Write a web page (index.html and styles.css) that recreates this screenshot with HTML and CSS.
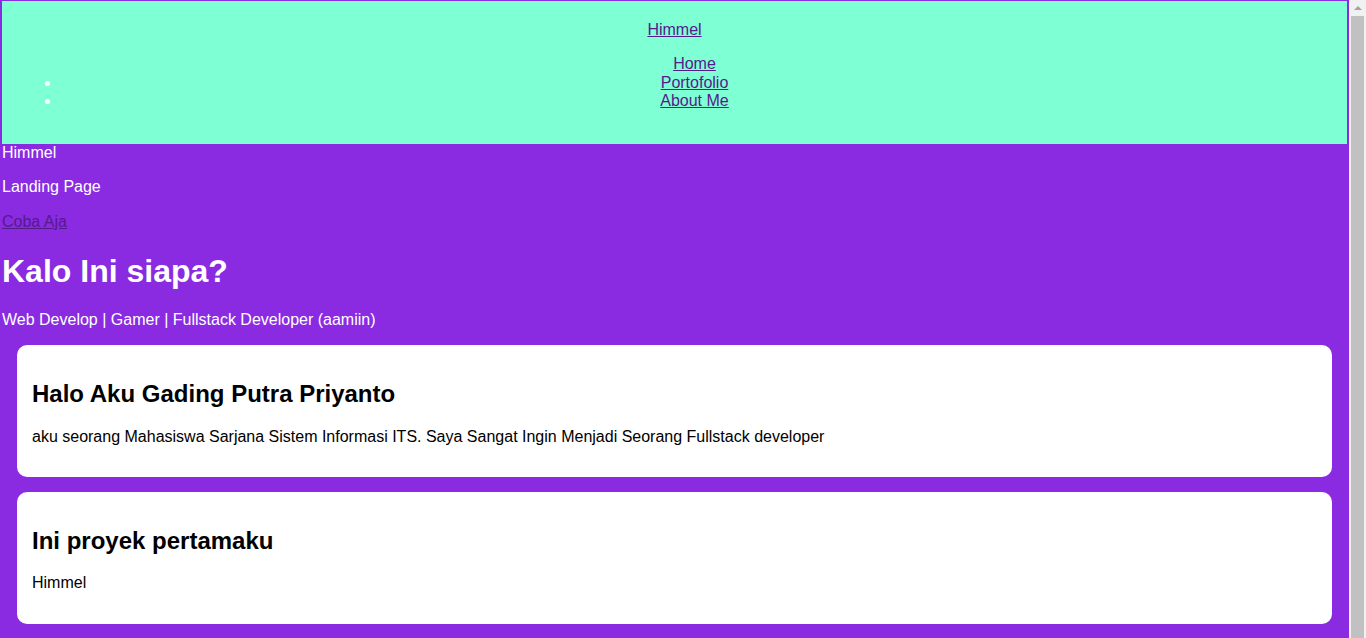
FILE: index.html
```html
<!DOCTYPE html>
<html lang="id">
<head>
<meta charset="utf-8">
<title>Himmel</title>
<link rel="stylesheet" href="styles.css">
</head>
<body>
<header class="site-header">
  <div class="brand"><a href="#">Himmel</a></div>
  <ul class="nav">
    <li class="nav-first"><a href="#">Home</a></li>
    <li><a href="#">Portofolio</a></li>
    <li><a href="#">About Me</a></li>
  </ul>
</header>
<div class="hero-name">Himmel</div>
<p>Landing Page</p>
<p><a href="#">Coba Aja</a></p>
<h1>Kalo Ini siapa?</h1>
<p>Web Develop | Gamer | Fullstack Developer (aamiin)</p>
<section class="card">
  <h2>Halo Aku Gading Putra Priyanto</h2>
  <p>aku seorang Mahasiswa Sarjana Sistem Informasi ITS. Saya Sangat Ingin Menjadi Seorang Fullstack developer</p>
</section>
<section class="card">
  <h2>Ini proyek pertamaku</h2>
  <p>Himmel</p>
</section>
<div class="scrollbar" aria-hidden="true">
  <div class="scrollbar-arrow"></div>
  <div class="scrollbar-thumb"></div>
</div>
</body>
</html>
```

FILE: styles.css
```css
body {
  margin: 1px 19px 1px 2px;
  background: #8a2be2;
  color: #ffffff;
  font-family: "Liberation Sans", Arial, sans-serif;
  font-size: 16px;
  line-height: 1.15;
}
a {
  color: #551a8b;
}
.site-header {
  background: #7fffd4;
  padding: 20px 19px 17.4px;
  text-align: center;
}
.nav li.nav-first {
  list-style: none;
}
.card {
  background: #ffffff;
  color: #000000;
  margin: 15px;
  padding: 15px;
  border-radius: 10px;
}
.scrollbar {
  position: fixed;
  top: 0;
  right: 0;
  bottom: 0;
  width: 17px;
  background: #f1f1f1;
  display: flex;
  flex-direction: column;
  align-items: center;
}
.scrollbar-arrow {
  margin-top: 6px;
  width: 0;
  height: 0;
  border-left: 4px solid transparent;
  border-right: 4px solid transparent;
  border-bottom: 4px solid #a3a3a3;
}
.scrollbar-thumb {
  margin-top: 6px;
  width: 13px;
  flex: 1;
  background: #c1c1c1;
}
```
